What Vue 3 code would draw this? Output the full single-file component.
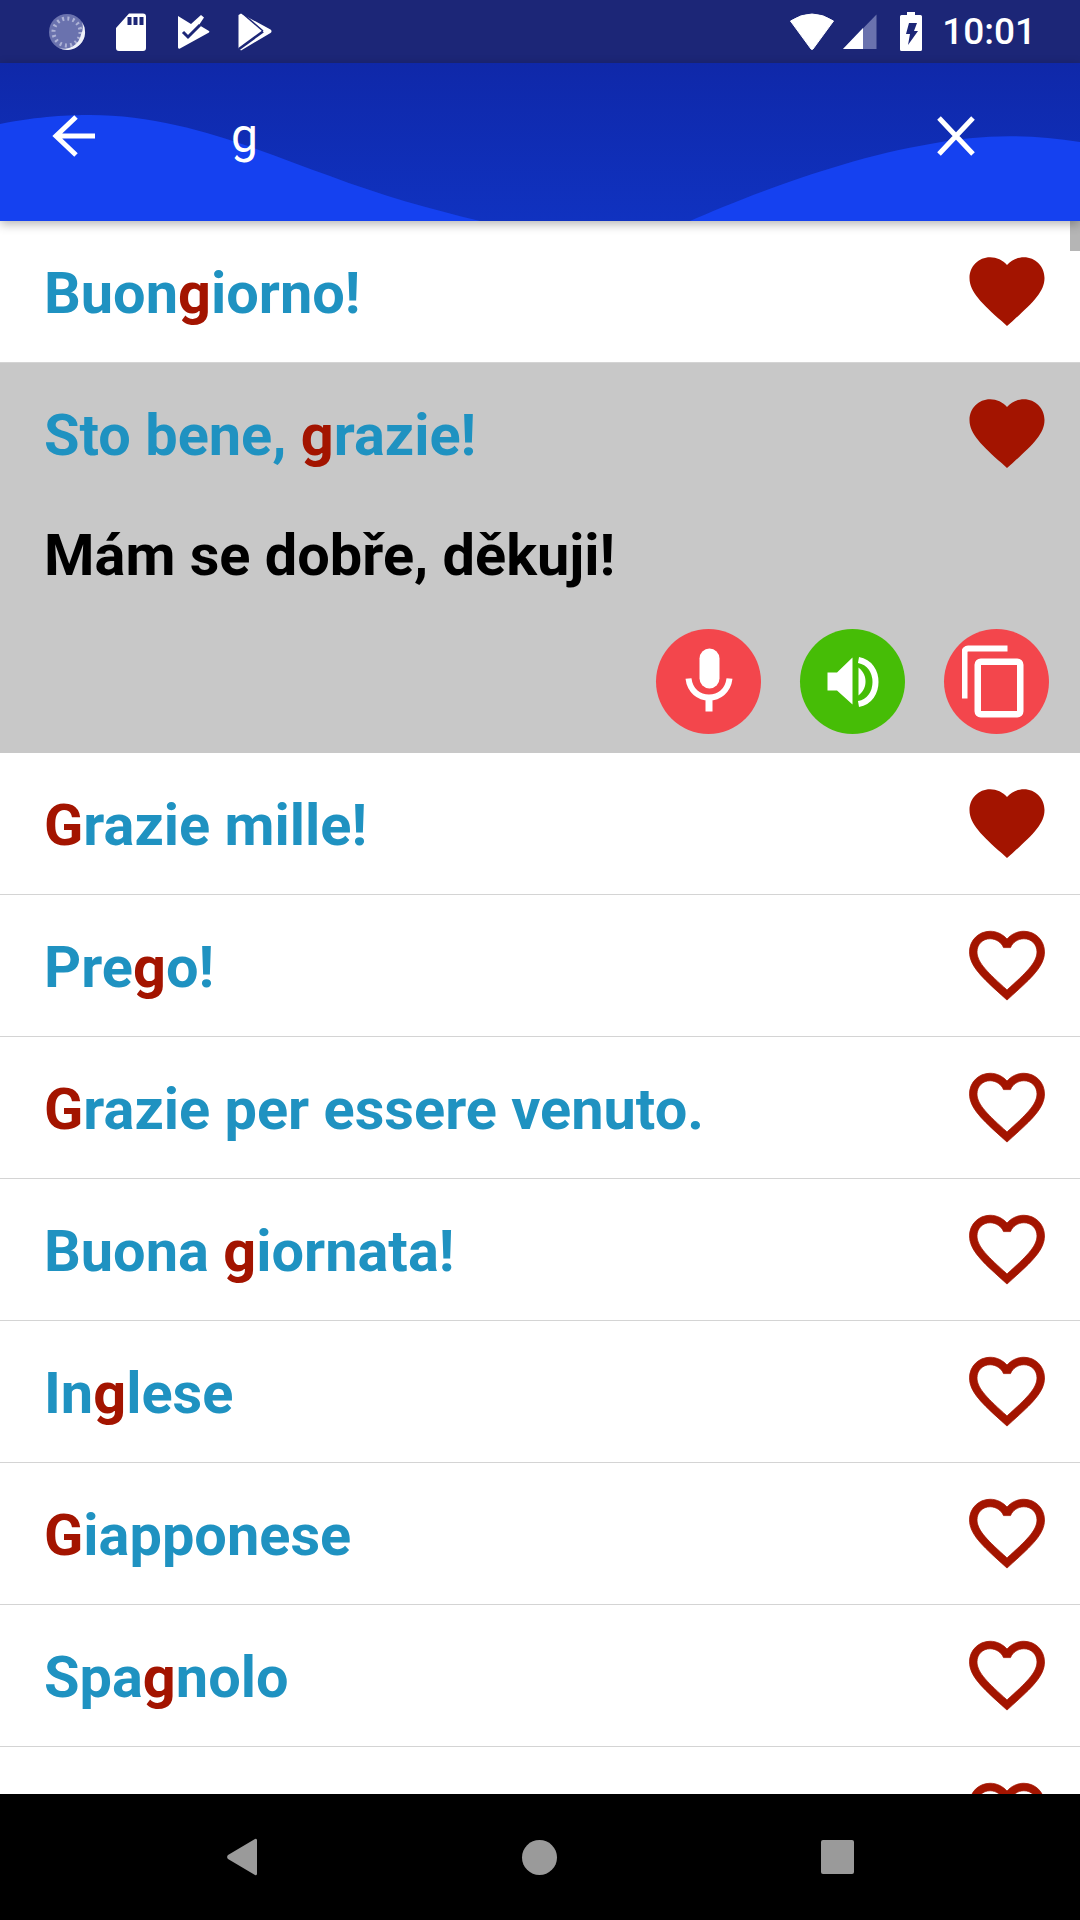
<script setup>
import { ref } from "vue";

const phrases = ref([
  { before: "Buon", match: "g", after: "iorno!", liked: true },
  {
    before: "Sto bene, ",
    match: "g",
    after: "razie!",
    liked: true,
    open: true,
    translation: "Mám se dobře, děkuji!",
  },
  { before: "", match: "G", after: "razie mille!", liked: true },
  { before: "Pre", match: "g", after: "o!", liked: false },
  { before: "", match: "G", after: "razie per essere venuto.", liked: false },
  { before: "Buona ", match: "g", after: "iornata!", liked: false },
  { before: "In", match: "g", after: "lese", liked: false },
  { before: "", match: "G", after: "iapponese", liked: false },
  { before: "Spa", match: "g", after: "nolo", liked: false },
  { before: "", match: "", after: "", liked: false },
]);

const HEART_FULL =
  "M12 21.35l-1.45-1.32C5.4 15.36 2 12.28 2 8.5 2 5.42 4.42 3 7.5 3c1.74 0 3.41.81 4.5 2.09C13.09 3.81 14.76 3 16.5 3 19.58 3 22 5.42 22 8.5c0 3.78-3.4 6.86-8.55 11.54L12 21.35z";
const HEART_EMPTY =
  "M16.5 3c-1.74 0-3.41.81-4.5 2.09C10.91 3.81 9.24 3 7.5 3 4.42 3 2 5.42 2 8.5c0 3.78 3.4 6.86 8.55 11.54L12 21.35l1.45-1.32C18.6 15.36 22 12.28 22 8.5 22 5.42 19.58 3 16.5 3zm-4.4 15.55l-.1.1-.1-.1C7.14 14.24 4 11.39 4 8.5 4 6.5 5.5 5 7.5 5c1.54 0 3.04.99 3.57 2.36h1.87C13.46 5.99 14.96 5 16.5 5c2 0 3.5 1.5 3.5 3.5 0 2.89-3.14 5.74-7.9 10.05z";
</script>

<template>
  <div class="screen">
    <div class="status-bar">
      <div class="status-left">
        <svg class="ic-sync" width="38" height="38" viewBox="0 0 38 38">
          <circle cx="19" cy="19" r="18" fill="#6a72ae" />
          <circle cx="19" cy="19" r="13.5" fill="none" stroke="#aeb3d6" stroke-width="4" stroke-dasharray="2 3.3" />
          <path d="M34 9a18 18 0 0 1-24 25.6a17 17 0 0 0 23-13a17 17 0 0 0 1-12.600z" fill="#eef0f8" />
        </svg>
        <svg class="ic-sd" width="30" height="38" viewBox="0 0 30 38">
          <path d="M13 0.500H27a3 3 0 0 1 3 3V35a3 3 0 0 1-3 3H3a3 3 0 0 1-3-3V15z" fill="#fff" />
          <path d="M11.500 4h4v8h-4zM17.500 4h4v8h-4zM23.500 4h4v8h-4z" fill="#1c2677" />
        </svg>
        <svg class="ic-tasks" width="33" height="36" viewBox="0 0 33 36">
          <path d="M1 2L14 10L24 1L27 3.500L22 11L32 17a1 1 0 0 1 0 1.500L3 34.500a1.500 1.500 0 0 1-2-1z" fill="#fff" />
          <path d="M6 18L11 23L23 11" fill="none" stroke="#1c2677" stroke-width="3" />
        </svg>
        <svg class="ic-play" width="34" height="38" viewBox="0 0 34 38">
          <path d="M0.500 2L3 0.500L32.500 16.500a2 2 0 0 1 0 3.500L3 37.500L0.500 35z" fill="#fff" />
          <path d="M4 0L25 18" stroke="#1c2677" stroke-width="1.500" />
          <path d="M1 36L25 18.500" stroke="#1c2677" stroke-width="2.500" />
        </svg>
      </div>
      <div class="status-right">
        <svg class="ic-wifi" width="44" height="38" viewBox="0 0 44 38">
          <path d="M0.500 8Q22-6 43.500 8L23 36a1.500 1.500 0 0 1-2 0z" fill="#fff" stroke="#fff" stroke-linejoin="round" />
        </svg>
        <svg class="ic-signal" width="34" height="36" viewBox="0 0 34 36">
          <path d="M33.500 0.500V35H0z" fill="#6a72ae" />
          <path d="M20 14V35H0z" fill="#fff" />
        </svg>
        <svg class="ic-battery" width="22" height="39" viewBox="0 0 22 39">
          <path d="M7 0h8v3h5.500a1.500 1.500 0 0 1 1.500 1.500V37.500a1.500 1.500 0 0 1-1.500 1.500H1.500A1.500 1.500 0 0 1 0 37.500V4.500A1.500 1.500 0 0 1 1.500 3H7z" fill="#fff" />
          <path d="M9 11h8l-3 8h4L8 33l2-11H6z" fill="#1c2677" />
        </svg>
        <span class="clock">10:01</span>
      </div>
    </div>

    <header class="search-bar">
      <svg class="wave" width="1080" height="158" viewBox="0 0 1080 158" preserveAspectRatio="none">
        <path d="M0 61C40 53 70 52 90 52C180 52 260 88 330 113C380 132 430 146 480 158H690C740 136 840 96 930 81C980 71 1030 71 1080 79V158H0z" fill="#1541f0" />
      </svg>
      <svg class="back" width="48" height="48" viewBox="0 0 48 48">
        <path d="M46 24H8M27 5L7 24L27 43" fill="none" stroke="#fff" stroke-width="5" />
      </svg>
      <span class="query">g</span>
      <svg class="close" width="48" height="48" viewBox="0 0 48 48">
        <path d="M7 6L41 42M41 6L7 42" fill="none" stroke="#fff" stroke-width="5" />
      </svg>
    </header>

    <div class="list">
      <div class="scroll-thumb"></div>
      <div
        v-for="(p, i) in phrases"
        :key="i"
        class="row"
        :class="{ 'row-open': p.open }"
      >
        <div class="row-main">
          <span class="phrase">{{ p.before }}<span class="hit">{{ p.match }}</span>{{ p.after }}</span>
          <svg class="heart" width="90" height="90" viewBox="0 0 24 24">
            <path
              :d="p.liked ? HEART_FULL : HEART_EMPTY"
              fill="#a31400"
              :stroke="p.liked ? 'none' : '#a31400'"
              stroke-width="0.2"
            />
          </svg>
        </div>
        <template v-if="p.open">
          <div class="translation">{{ p.translation }}</div>
          <div class="actions">
            <button class="round red">
              <svg width="60" height="70" viewBox="0 0 60 70">
                <rect x="20.500" y="1.500" width="20" height="40" rx="10" fill="#fff" />
                <path d="M9.500 31.500C11 44 20 50.500 30 50.500C40 50.500 49 44 50.500 31.500" fill="none" stroke="#fff" stroke-width="6" />
                <rect x="26.500" y="50" width="7" height="14.500" fill="#fff" />
              </svg>
            </button>
            <button class="round green">
              <svg width="60" height="60" viewBox="0 0 60 60">
                <path d="M4.500 20.500H14L29.500 5.500V52.500L14 38.500H4.500z" fill="#fff" />
                <path d="M35.500 15.500C41 20 42.500 25 42.500 29.500C42.500 34 41 39 35.500 43.500z" fill="#fff" />
                <path d="M35.500 8C47 10 52.500 20 52.500 30C52.500 40 47 50 35.500 52" fill="none" stroke="#fff" stroke-width="6" />
              </svg>
            </button>
            <button class="round red">
              <svg width="70" height="76" viewBox="0 0 70 76">
                <path d="M45.500 4.500H6a3.500 3.500 0 0 0-3.500 3.500V54.500" fill="none" stroke="#fff" stroke-width="6" />
                <rect x="15.750" y="17.750" width="42.500" height="52.500" rx="3" fill="none" stroke="#fff" stroke-width="6.500" />
              </svg>
            </button>
          </div>
        </template>
      </div>
    </div>

    <nav class="nav-bar">
      <svg width="32" height="38" viewBox="0 0 32 38">
        <path d="M29 1a1.500 1.500 0 0 1 2 1V36a1.500 1.500 0 0 1-2 1L2 21a3 3 0 0 1 0-4z" fill="#9a9a9a" />
      </svg>
      <div class="nav-dot"></div>
      <div class="nav-square"></div>
    </nav>
  </div>
</template>

<style scoped>
.screen {
  width: 1080px;
  height: 1920px;
  display: flex;
  flex-direction: column;
  overflow: hidden;
  background: #fff;
  font-family: Roboto, sans-serif;
}

.status-bar {
  height: 63px;
  flex: none;
  display: flex;
  justify-content: space-between;
  align-items: center;
  background: #1c2677;
  padding: 0 44px 0 48px;
  box-sizing: border-box;
}

.status-left,
.status-right {
  display: flex;
  align-items: center;
}

.ic-sd {
  margin-left: 30px;
}

.ic-tasks {
  margin-left: 31px;
}

.ic-play {
  margin-left: 28px;
}

.ic-signal {
  margin-left: 9px;
}

.ic-battery {
  margin-left: 23px;
}

.clock {
  margin-left: 20px;
  font-size: 37px;
  font-weight: 500;
  color: #fff;
  line-height: 40px;
}

.search-bar {
  position: relative;
  z-index: 2;
  height: 158px;
  flex: none;
  display: flex;
  align-items: flex-start;
  padding: 49px 100px 0 49px;
  box-sizing: border-box;
  background: linear-gradient(#0f28a9, #1032c0);
  box-shadow: 0 3px 10px rgba(0, 0, 0, 0.3);
  overflow: visible;
}

.wave {
  position: absolute;
  left: 0;
  top: 0;
}

.back,
.close,
.query {
  position: relative;
}

.query {
  margin-left: 134px;
  font-size: 48px;
  line-height: 48px;
  color: #fff;
}

.close {
  margin-left: auto;
}

.list {
  position: relative;
  flex: 1;
  overflow: hidden;
}

.scroll-thumb {
  position: absolute;
  right: 0;
  top: 0;
  width: 10px;
  height: 30px;
  background: #b5b5b5;
}

.row {
  border-bottom: 1px solid #d4d4d4;
}

.row-open {
  background: #c8c8c8;
  border-bottom: none;
  height: 390px;
}

.row-main {
  height: 141px;
  display: flex;
  align-items: center;
  justify-content: space-between;
  padding: 0 28px 0 44px;
}

.phrase {
  font-size: 57.7px;
  font-weight: 700;
  color: #1f92c1;
  white-space: nowrap;
  position: relative;
  top: 1px;
}

.hit {
  color: #a31400;
}

.heart {
  flex: none;
  margin-top: -1px;
}

.translation {
  padding-left: 44px;
  font-size: 57.7px;
  font-weight: 700;
  line-height: 66px;
  margin-top: 18px;
  color: #000;
}

.actions {
  display: flex;
  justify-content: flex-end;
  gap: 39px;
  padding-right: 31px;
  margin-top: 41px;
}

.round {
  width: 105px;
  height: 105px;
  border: none;
  border-radius: 50%;
  padding: 0;
  display: flex;
  align-items: center;
  justify-content: center;
}

.red {
  background: #f3464c;
}

.green {
  background: #46bd06;
}

.nav-bar {
  height: 126px;
  flex: none;
  position: relative;
  z-index: 2;
  background: #000;
  display: flex;
  align-items: center;
  justify-content: center;
  gap: 264px;
}

.nav-dot {
  width: 35px;
  height: 35px;
  border-radius: 50%;
  background: #9a9a9a;
}

.nav-square {
  width: 33px;
  height: 34px;
  border-radius: 2px;
  background: #9a9a9a;
}
</style>

<style>
html,
body {
  margin: 0;
  background: #fff;
}
</style>
